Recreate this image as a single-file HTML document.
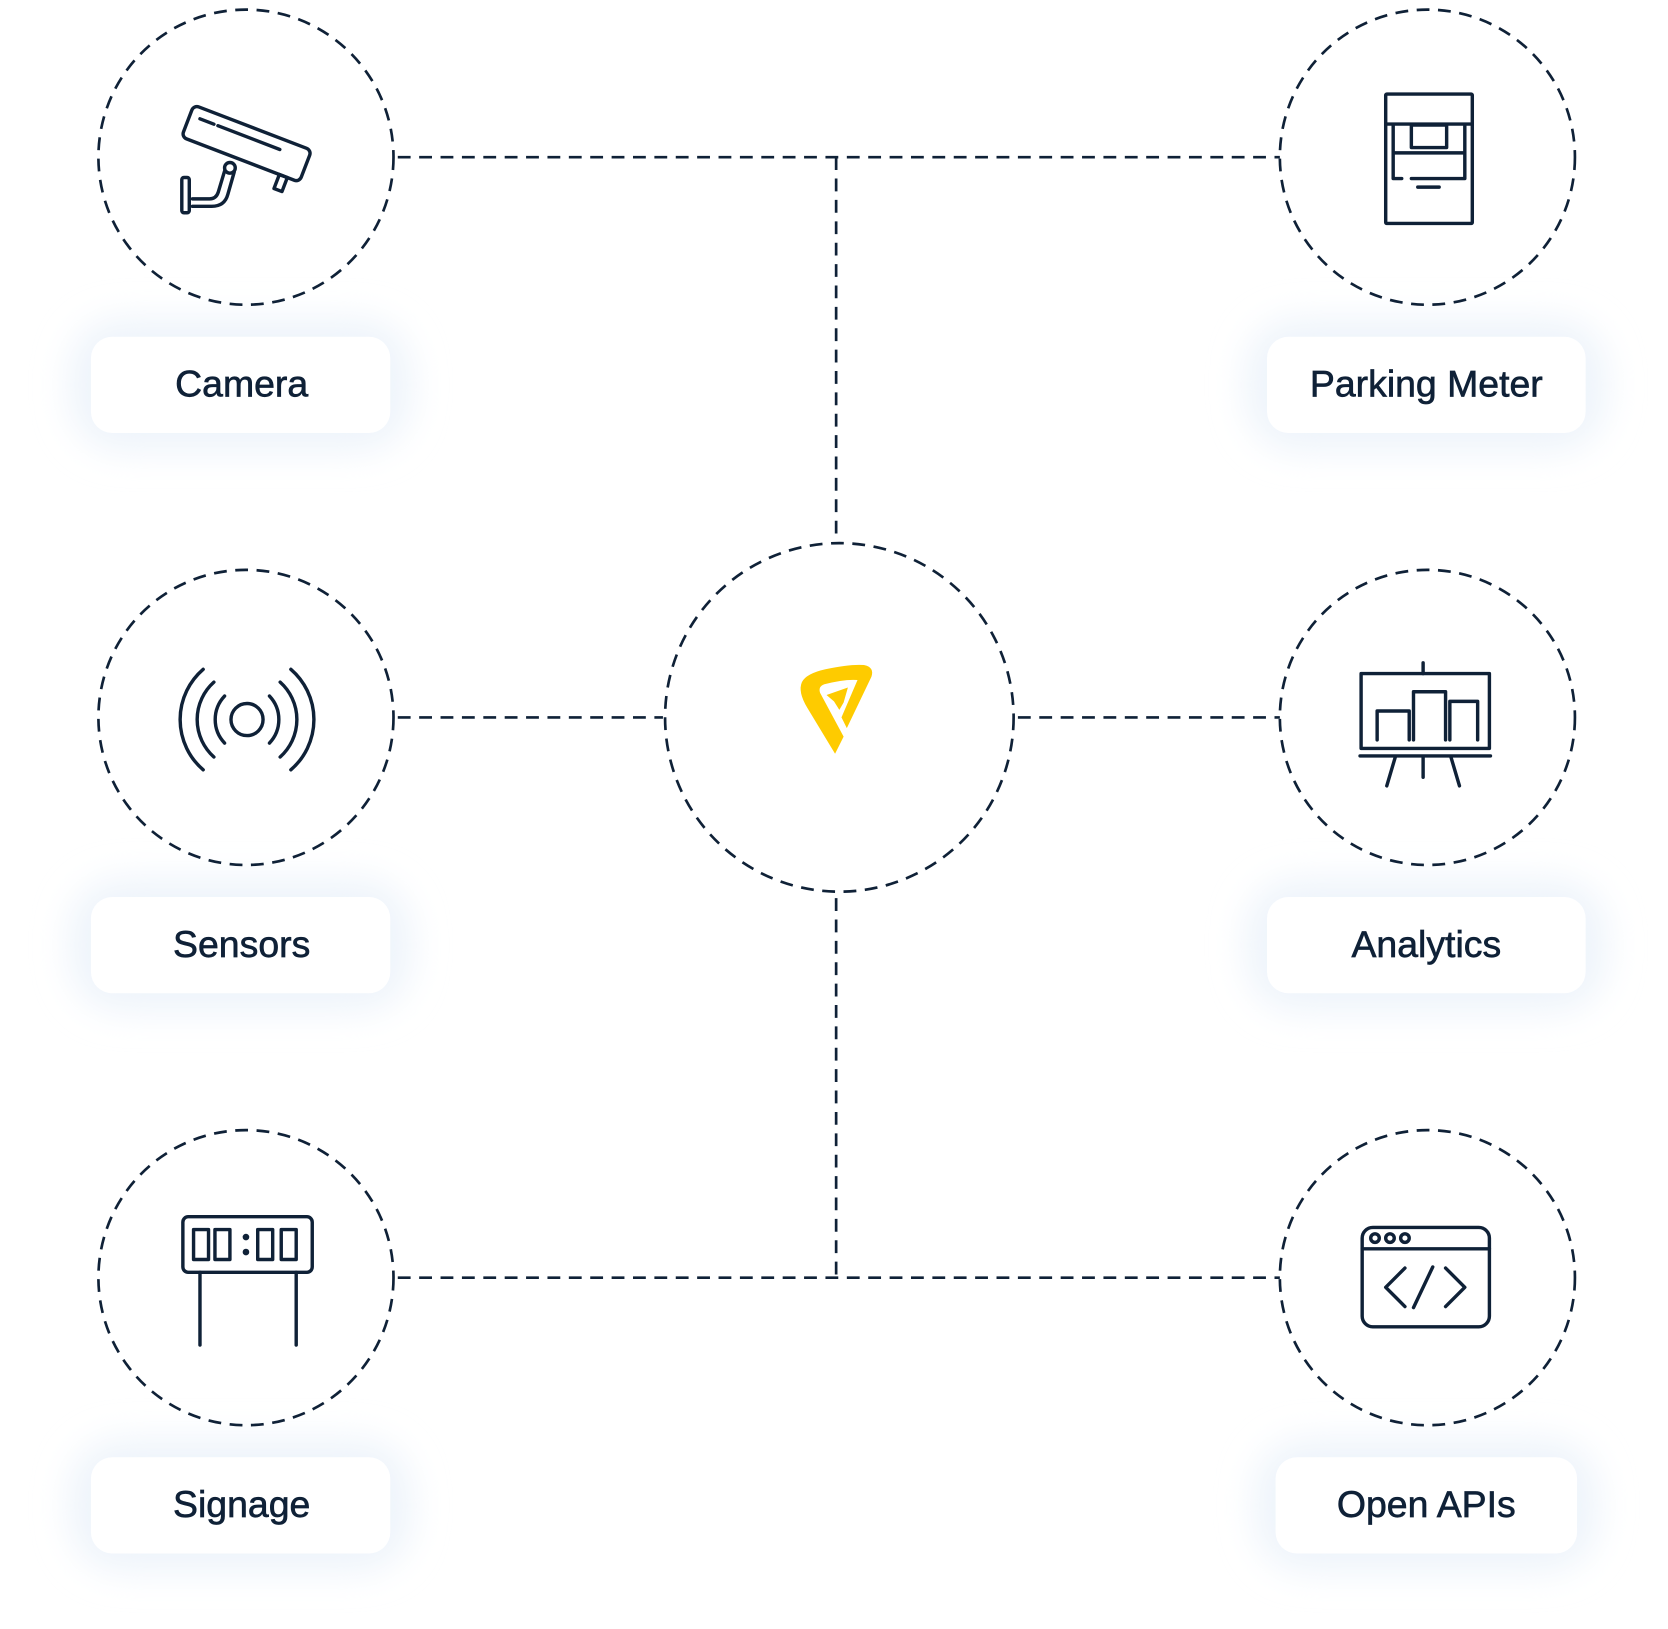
<!DOCTYPE html>
<html><head><meta charset="utf-8"><style>
html,body{margin:0;padding:0;background:#fff;width:1668px;height:1629px;overflow:hidden}
svg{display:block}
text{font-family:"Liberation Sans",sans-serif;font-size:35px;fill:#0f2137;text-anchor:middle;stroke:#0f2137;stroke-width:0.6}
</style></head><body>
<svg width="1668" height="1629" viewBox="0 0 1560 1523.6" xmlns="http://www.w3.org/2000/svg">
<defs>
<filter id="g" x="-50%" y="-80%" width="200%" height="260%"><feGaussianBlur stdDeviation="16"/></filter>
</defs>
<g fill="#eef4fb" filter="url(#g)">
<rect x="65" y="298" width="320" height="124" rx="50"/>
<rect x="65" y="822" width="320" height="124" rx="50"/>
<rect x="65" y="1346" width="320" height="124" rx="50"/>
<rect x="1165" y="298" width="338" height="124" rx="50"/>
<rect x="1165" y="822" width="338" height="124" rx="50"/>
<rect x="1173" y="1346" width="322" height="124" rx="50"/>
</g>
<g fill="#fff">
<rect x="85" y="315" width="280" height="90" rx="20"/>
<rect x="85" y="839" width="280" height="90" rx="20"/>
<rect x="85" y="1363" width="280" height="90" rx="20"/>
<rect x="1185" y="315" width="298" height="90" rx="20"/>
<rect x="1185" y="839" width="298" height="90" rx="20"/>
<rect x="1193" y="1363" width="282" height="90" rx="20"/>
</g>
<text x="226" y="371">Camera</text>
<text x="226" y="895">Sensors</text>
<text x="226" y="1419">Signage</text>
<text x="1334" y="371">Parking Meter</text>
<text x="1334" y="895">Analytics</text>
<text x="1334" y="1419">Open APIs</text>

<g fill="none" stroke="#0f2137" stroke-width="2.5" stroke-dasharray="12 8">
<circle cx="230" cy="147" r="138"/>
<circle cx="230" cy="671" r="138"/>
<circle cx="230" cy="1195" r="138"/>
<circle cx="1335" cy="147" r="138"/>
<circle cx="1335" cy="671" r="138"/>
<circle cx="1335" cy="1195" r="138"/>
<circle cx="785" cy="671" r="163"/>
<path d="M372 147H1197M782 147V502M372 671H620M952 671H1197M782 840V1195M372 1195H1197"/>
</g>

<!-- logo -->
<path fill="#fecb00" d="M781 705 L755 662 Q746 647 750 638 Q754 630 772 626 Q795 621 808 622 Q818 624 815 633 L792 681 L787 671 L802 636 Q790 635 771 640 Q765 642 767 648 L789 689 Z"/>
<path fill="#fecb00" d="M773 650 L793 643 L789 657 L785 664 L780 656 Z"/>

<g fill="none" stroke="#0f2137" stroke-width="3.2" stroke-linecap="round" stroke-linejoin="round">
<!-- camera -->
<g transform="rotate(21 230 133)">
<rect x="172" y="118" width="118" height="32" rx="5"/>
<path d="M182 128H196M200 128H262"/>
<rect x="270" y="150" width="8" height="14"/>
</g>
<circle cx="215" cy="157" r="5"/>
<path d="M210 160 L204 180 Q202 186 196 186 H180"/>
<path d="M219 161 L213 182 Q210 193 198 193 H180"/>
<rect x="170" y="166" width="7" height="33" rx="2"/>
<!-- sensor -->
<circle cx="231" cy="673" r="15"/>
<path d="M210 651A32 32 0 0 0 210 695M252 651A32 32 0 0 1 252 695"/>
<path d="M200 638A47 47 0 0 0 200 708M262 638A47 47 0 0 1 262 708"/>
<path d="M190 626A62 62 0 0 0 190 720M272 626A62 62 0 0 1 272 720"/>
<!-- signage -->
<rect x="171" y="1138" width="121" height="52" rx="5"/>
<rect x="181" y="1150" width="14" height="28"/>
<rect x="201" y="1150" width="14" height="28"/>
<rect x="241" y="1150" width="14" height="28"/>
<rect x="263" y="1150" width="14" height="28"/>
<circle cx="230" cy="1157" r="1.5"/><circle cx="230" cy="1171" r="1.5"/>
<path d="M187 1190V1258M277 1190V1258"/>
<!-- parking meter -->
<rect x="1296" y="88" width="81" height="121" rx="1"/>
<path d="M1296 116H1377M1303 116V167H1311M1320 167H1370V116M1303 143H1370M1326 175H1346"/>
<rect x="1320" y="117" width="33" height="21"/>
<!-- analytics -->
<rect x="1273" y="630" width="120" height="70"/>
<path d="M1272 707H1394M1305 708L1297 735M1331 708V727M1357 708L1365 735M1331 620V630"/>
<path d="M1288 692V665H1318V692M1322 692V647H1352V692M1356 692V656H1382V692"/>
<!-- API -->
<rect x="1274" y="1148" width="119" height="93" rx="10"/>
<path d="M1274 1168H1393"/>
<circle cx="1286" cy="1158" r="4"/><circle cx="1300" cy="1158" r="4"/><circle cx="1314" cy="1158" r="4"/>
<path d="M1314 1186L1296 1204L1314 1222M1340 1185L1322 1223M1352 1186L1370 1204L1352 1222"/>
</g>
</svg>
</body></html>
